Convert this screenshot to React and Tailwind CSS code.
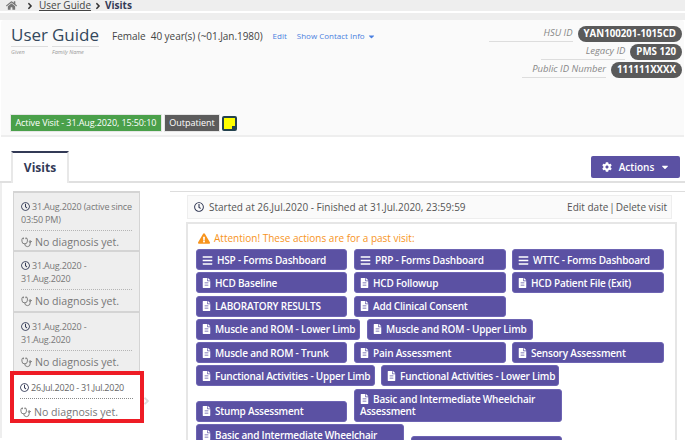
import React from "react";
import { FaHome, FaCog, FaCaretDown, FaRegClock, FaBars, FaFileAlt, FaExclamationTriangle, FaAngleRight } from "react-icons/fa";
import { Stethoscope } from "lucide-react";

const font = "font-['Open_Sans','Noto_Sans',sans-serif]";

const visits = [
  { date: "31.Aug.2020 (active since 03:50 PM)", h: "h-[59px]" },
  { date: "31.Aug.2020 - 31.Aug.2020", h: "h-[61px]" },
  { date: "31.Aug.2020 - 31.Aug.2020", h: "h-[60px]" },
];

function ActionButton({ label, icon = "file", w, className = "" }) {
  return (
    <button className={`${w} ${className} shrink-0 rounded-[3px] bg-[#5b51a3] border border-[#6d64b3] pl-[5px] pr-[2px] py-[3.5px] text-left text-[10px] font-semibold leading-[12px] tracking-[-0.2px] text-white`}>
      {icon === "bars" ? (
        <FaBars className="mr-[4px] inline-block h-[11px] w-[11px] align-[-2px]" />
      ) : (
        <FaFileAlt className="mr-[4px] inline-block h-[10px] w-[9px] align-[-1px]" />
      )}
      {label}
    </button>
  );
}

function VisitItem({ date, h }) {
  return (
    <div className={`${h} border-b-2 border-[#d4d4d4] bg-[#eeeeee] px-[7px] pt-[7px]`}>
      <div className="border-b border-dotted border-[#b5b5b5] pb-[4px] text-[9px] leading-[13px] tracking-[-0.2px] text-[#777]">
        <FaRegClock className="mr-[2px] inline-block h-[9px] w-[9px] align-[-1px] text-[#333a56]" />
        {date}
      </div>
      <div className="mt-[3px] flex items-center gap-[3px] text-[10.6px] leading-[16px] text-[#777]">
        <Stethoscope className="h-[11px] w-[11px]" strokeWidth={2} />
        No diagnosis yet.
      </div>
    </div>
  );
}

export default function App() {
  return (
    <div className={`${font} relative h-[440px] w-[685px] overflow-hidden bg-white text-[#444]`}>
      <div className="flex h-[11px] items-center bg-[#eeeeee] pl-[6px] text-[10px] leading-[11px] text-[#444]">
        <FaHome className="h-[11px] w-[11px] text-[#777]" />
        <FaAngleRight className="ml-[9px] h-[10px] w-[8px] text-[#333]" />
        <span className="ml-[5px] underline">User Guide</span>
        <FaAngleRight className="ml-[3px] h-[10px] w-[8px] text-[#333]" />
        <span className="ml-[3px] font-bold text-[#333a56]">Visits</span>
      </div>
      <div className="mt-[2px] h-[7px] bg-[#eeeeee]" />

      <div className="mx-[1px] flex h-[117px] justify-between rounded-t-[3px] border-b-[2px] border-[#eeeeee] bg-[#fafafa] pl-[10px] pr-[2px]">
        <div className="flex h-full flex-col">
          <div className="flex items-start pt-[3px]">
            <div className="w-[37px]">
              <div className="border-b border-[#ddd] text-[17px] leading-[23px] text-[#33485c]">User</div>
              <div className="text-[5.5px] italic leading-[10px] text-[#999]">Given</div>
            </div>
            <div className="ml-[4px] w-[47px]">
              <div className="border-b border-[#ddd] text-[17px] leading-[23px] text-[#33485c]">Guide</div>
              <div className="text-[5.5px] italic leading-[10px] text-[#999]">Family Name</div>
            </div>
            <div className="ml-[13px] flex items-center pt-[6px] text-[10px] leading-[14px] text-[#444]">
              <span>Female</span>
              <span className="ml-[5px] tracking-[-0.05px]">40 year(s) (~01.Jan.1980)</span>
              <span className="ml-[10px] text-[8px] text-[#4a7fe0]">Edit</span>
              <span className="ml-[10px] text-[8px] text-[#4a7fe0]">Show Contact Info</span>
              <FaCaretDown className="ml-[3px] h-[9px] w-[7px] text-[#4a7fe0]" />
            </div>
          </div>
          <div className="mt-auto mb-[3px] flex items-center gap-[2px] text-[9px] font-medium leading-[16px] text-white">
            <span className="-ml-[1px] border border-[#e6e6e6] bg-[#4aa04a] px-[4.5px] tracking-[-0.1px]">Active Visit - 31.Aug.2020, 15:50:10</span>
            <span className="border border-[#e6e6e6] bg-[#5c5c5c] px-[4.5px]">Outpatient</span>
            <span className="relative h-[15px] w-[15px] rounded-[2px] border-2 border-[#24424f] bg-[#ffff00]">
              <span className="absolute bottom-0 right-0 h-[3px] w-[3px] bg-[#24424f]" />
            </span>
          </div>
        </div>
        <div className="flex flex-col items-end gap-[1px] pt-[5px] text-[9.5px] italic leading-[16px] text-[#888]">
          <div className="flex items-center gap-[5px]">
            <span className="w-[84px] border-b border-[#ddd] text-right">HSU ID</span>
            <span className="rounded-full bg-[#5a5a5a] px-[6px] text-[9.7px] font-bold not-italic text-white">YAN100201-1015CD</span>
          </div>
          <div className="flex items-center gap-[5px]">
            <span className="w-[84px] border-b border-[#ddd] text-right">Legacy ID</span>
            <span className="rounded-full bg-[#5a5a5a] px-[6px] text-[9.7px] font-bold not-italic text-white">PMS 120</span>
          </div>
          <div className="flex items-center gap-[5px]">
            <span className="w-[84px] border-b border-[#ddd] text-right">Public ID Number</span>
            <span className="rounded-full bg-[#5a5a5a] px-[6px] text-[9.7px] font-bold not-italic text-white">111111XXXX</span>
          </div>
        </div>
      </div>

      <div className="flex h-[46px] items-end justify-between border-b-2 border-[#e0e0e0] pl-[11px] pr-[5px]">
        <div className="-mb-[2px] flex h-[32px] w-[58px] items-center justify-center border-x-2 border-b-0 border-t-2 border-x-[#e8e8e8] border-t-[#333a56] bg-white text-[12px] font-bold text-[#333a56]">
          Visits
        </div>
        <button className="mb-[3px] flex h-[22px] w-[89px] items-center justify-center gap-[7px] rounded-[2px] bg-[#5b51a3] text-[10px] font-semibold text-white">
          <FaCog className="h-[10px] w-[10px]" />
          Actions
          <FaCaretDown className="h-[10px] w-[8px]" />
        </button>
      </div>

      <div className="flex h-[255px] border-l-2 border-[#eeeeee] pl-[11px]">
        <div className="relative mt-[8px] w-[127px] shrink-0">
          <div className="border-x border-t-2 border-[#d4d4d4]">
            {visits.map((v, i) => (
              <VisitItem key={i} date={v.date} h={v.h} />
            ))}
          </div>
          <div className="h-[48px] bg-white px-[7px] pt-[8px]">
            <div className="border-b border-dotted border-[#888] pb-[4px] text-[9px] leading-[13px] tracking-[-0.25px] text-[#666]">
              <FaRegClock className="mr-[2px] inline-block h-[9px] w-[9px] align-[-1px] text-[#333a56]" />
              26.Jul.2020 - 31.Jul.2020
            </div>
            <div className="mt-[5px] flex items-center gap-[3px] text-[10.6px] leading-[16px] text-[#777]">
              <Stethoscope className="h-[11px] w-[11px]" strokeWidth={2} />
              No diagnosis yet.
            </div>
          </div>
          <FaAngleRight className="absolute left-[130px] top-[204px] h-[12px] w-[7px] text-[#ddd]" />
          <div className="absolute -left-[3px] top-[180px] h-[52px] w-[134px] border-[4px] border-[#ee1c25]" />
        </div>

        <div className="ml-[30px] mt-[8px] min-w-0 flex-1 border-t border-[#ddd]">
          <div className="ml-[17px] mt-[3px] flex h-[24px] w-[485px] items-center justify-between border border-[#eee] bg-[#fafafa] pl-[6px] pr-[4px] text-[10px] leading-[14px] text-[#555]">
            <span className="flex items-center gap-[5px]">
              <FaRegClock className="h-[10px] w-[10px] text-[#333a56]" />
              Started at 26.Jul.2020 - Finished at 31.Jul.2020, 23:59:59
            </span>
            <span>Edit date<span className="mx-[1px]">|</span>Delete visit</span>
          </div>
          <div className="ml-[16px] mt-[3px] h-[240px] w-[491px] border-2 border-[#e6e6e6] pl-[8px] pr-[6px]">
            <div className="mt-[7px] flex h-[14px] items-center gap-[4px] pl-[2px] text-[10px] leading-[14px] text-[#f7941d]">
              <FaExclamationTriangle className="h-[11px] w-[12px]" />
              Attention! These actions are for a past visit:
            </div>
            <div className="mt-[4px] flex flex-col gap-[2.3px]">
              <div className="flex">
                <ActionButton icon="bars" label="HSP - Forms Dashboard" w="w-[151px]" />
                <ActionButton icon="bars" label="PRP - Forms Dashboard" w="w-[152px]" className="ml-[7px]" />
                <ActionButton icon="bars" label="WTTC - Forms Dashboard" w="w-[152px]" className="ml-[6px]" />
              </div>
              <div className="flex">
                <ActionButton label="HCD Baseline" w="w-[151px]" />
                <ActionButton label="HCD Followup" w="w-[152px]" className="ml-[7px]" />
                <ActionButton label="HCD Patient File (Exit)" w="w-[152px]" className="ml-[6px]" />
              </div>
              <div className="flex">
                <ActionButton label="LABORATORY RESULTS" w="w-[151px]" />
                <ActionButton label="Add Clinical Consent" w="w-[152px]" className="ml-[7px]" />
              </div>
              <div className="flex">
                <ActionButton label="Muscle and ROM - Lower Limb" w="w-[164px]" />
                <ActionButton label="Muscle and ROM - Upper Limb" w="w-[166px]" className="ml-[7px]" />
              </div>
              <div className="flex">
                <ActionButton label="Muscle and ROM - Trunk" w="w-[151px]" />
                <ActionButton label="Pain Assessment" w="w-[152px]" className="ml-[7px]" />
                <ActionButton label="Sensory Assessment" w="w-[152px]" className="ml-[6px]" />
              </div>
              <div className="flex">
                <ActionButton label="Functional Activities - Upper Limb" w="w-[179px]" />
                <ActionButton label="Functional Activities - Lower Limb" w="w-[178px]" className="ml-[6px]" />
              </div>
              <div className="flex items-end">
                <ActionButton label="Stump Assessment" w="w-[151px]" />
                <ActionButton label="Basic and Intermediate Wheelchair Assessment" w="w-[208px]" className="ml-[7px]" />
              </div>
              <div className="flex items-end">
                <ActionButton label="Basic and Intermediate Wheelchair Prescription" w="w-[208px]" />
                <ActionButton label="Follow Up" w="w-[151px]" className="ml-[7px]" />
              </div>
            </div>
          </div>
        </div>
      </div>
    </div>
  );
}
